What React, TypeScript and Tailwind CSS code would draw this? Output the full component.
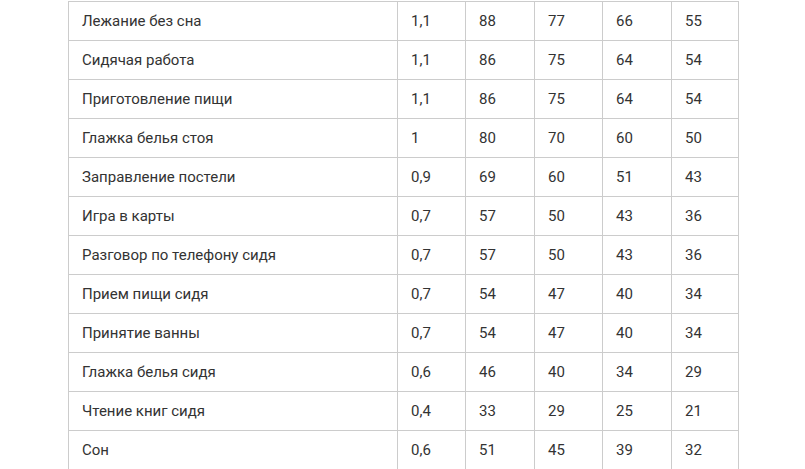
import React from "react";

const rows: [string, string, string, string, string, string][] = [
  ["Лежание без сна", "1,1", "88", "77", "66", "55"],
  ["Сидячая работа", "1,1", "86", "75", "64", "54"],
  ["Приготовление пищи", "1,1", "86", "75", "64", "54"],
  ["Глажка белья стоя", "1", "80", "70", "60", "50"],
  ["Заправление постели", "0,9", "69", "60", "51", "43"],
  ["Игра в карты", "0,7", "57", "50", "43", "36"],
  ["Разговор по телефону сидя", "0,7", "57", "50", "43", "36"],
  ["Прием пищи сидя", "0,7", "54", "47", "40", "34"],
  ["Принятие ванны", "0,7", "54", "47", "40", "34"],
  ["Глажка белья сидя", "0,6", "46", "40", "34", "29"],
  ["Чтение книг сидя", "0,4", "33", "29", "25", "21"],
  ["Сон", "0,6", "51", "45", "39", "32"],
];

export default function App() {
  return (
    <div className="w-[805px] h-[469px] overflow-hidden bg-white pt-px" style={{ fontFamily: "Roboto, 'Liberation Sans', sans-serif" }}>
      <table className="ml-[68px] w-[670px] table-fixed border-collapse text-[15px] text-[#333333]">
        <colgroup>
          <col className="w-[329px]" />
          <col className="w-[68px]" />
          <col className="w-[69px]" />
          <col className="w-[68px]" />
          <col className="w-[69px]" />
          <col className="w-[67px]" />
        </colgroup>
        <tbody>
          {rows.map((r, i) => (
            <tr key={i} className="h-[39px]">
              {r.map((c, j) => (
                <td key={j} className="border border-[#cccccc] px-[13px] py-0 align-middle leading-none">
                  {c}
                </td>
              ))}
            </tr>
          ))}
        </tbody>
      </table>
    </div>
  );
}
